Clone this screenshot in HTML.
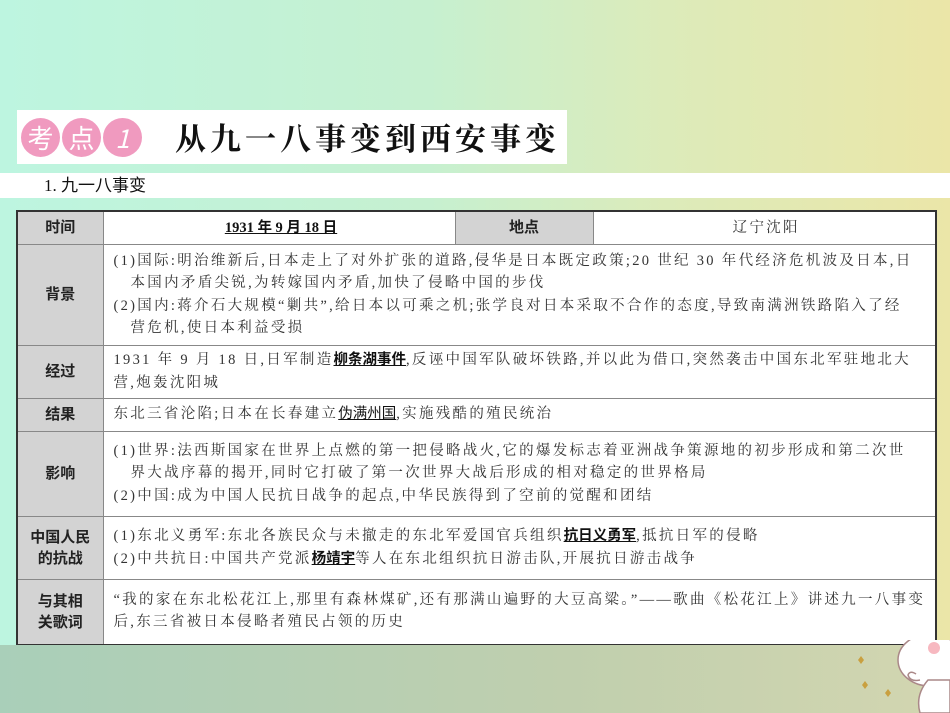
<!DOCTYPE html>
<html><head><meta charset="utf-8"><style>
*{margin:0;padding:0;box-sizing:border-box}
body{width:950px;height:713px;overflow:hidden;position:relative;background:linear-gradient(90deg,#bdf5e0 0%,#c6f0d0 45%,#dcebba 70%,#ebe6a8 100%);font-family:"Liberation Serif","Noto Serif CJK SC",serif;color:#333}
.bot{position:absolute;left:0;top:645px;width:950px;height:68px;background:linear-gradient(90deg,#a9cfb9,#c0cfae 60%,#d3d6b0)}
.title{position:absolute;left:17px;top:110px;width:550px;height:54px;background:#fff}
.c{position:absolute;top:8px;width:39px;height:39px;border-radius:50%;background:#f09abf;color:#fff;font:26px/39px "Noto Sans CJK SC",sans-serif;text-align:center}
.tt{position:absolute;left:158px;top:5px;font:bold 31px/44px "Noto Serif CJK SC",serif;letter-spacing:4px;color:#111;white-space:nowrap}
.band{position:absolute;left:0;top:173px;width:950px;height:25px;background:#fff}
.band span{position:absolute;left:44px;top:2px;font:17px/21px "Liberation Serif","Noto Sans CJK SC",serif;color:#111}
table{position:absolute;left:16px;top:210px;width:921px;height:434px;border-collapse:collapse;border:2px solid #333;background:#fff}
td{border:1px solid #888;font-size:14.5px;line-height:22.5px;letter-spacing:2.3px;vertical-align:middle;padding:0 6px 0 10px;white-space:nowrap}
td.h{background:#d3d3d3;width:86px;text-align:center;font:bold 15px/21px "Liberation Sans","Noto Sans CJK SC",sans-serif;letter-spacing:0;color:#222;padding:0}
.u{font-family:"Liberation Sans","Noto Sans CJK SC",sans-serif;font-weight:bold;text-decoration:underline;letter-spacing:0;color:#111}
.in{padding-left:17px}
</style></head><body>
<div class="title"><div class="c" style="left:4px">考</div><div class="c" style="left:45px">点</div><div class="c" style="left:86px;font-style:italic">1</div><div class="tt">从九一八事变到西安事变</div></div>
<div class="band"><span>1. 九一八事变</span></div>
<table>
<tr style="height:33px"><td class="h">时间</td><td style="text-align:center;width:352px"><span class="u" style="font-family:'Liberation Serif','Noto Sans CJK SC',serif">1931 年 9 月 18 日</span></td><td class="h" style="width:138px">地点</td><td style="text-align:center">辽宁沈阳</td></tr>
<tr style="height:101px"><td class="h">背景</td><td colspan="3">(1)国际:明治维新后,日本走上了对外扩张的道路,侵华是日本既定政策;20 世纪 30 年代经济危机波及日本,日<br><span class="in">本国内矛盾尖锐,为转嫁国内矛盾,加快了侵略中国的步伐</span><br>(2)国内:蒋介石大规模“剿共”,给日本以可乘之机;张学良对日本采取不合作的态度,导致南满洲铁路陷入了经<br><span class="in">营危机,使日本利益受损</span></td></tr>
<tr style="height:53px"><td class="h">经过</td><td colspan="3">1931 年 9 月 18 日,日军制造<span class="u">柳条湖事件</span>,反诬中国军队破坏铁路,并以此为借口,突然袭击中国东北军驻地北大<br>营,炮轰沈阳城</td></tr>
<tr style="height:33px"><td class="h">结果</td><td colspan="3">东北三省沦陷;日本在长春建立<span class="u" style="font-weight:normal">伪满州国</span>,实施残酷的殖民统治</td></tr>
<tr style="height:85px"><td class="h">影响</td><td colspan="3">(1)世界:法西斯国家在世界上点燃的第一把侵略战火,它的爆发标志着亚洲战争策源地的初步形成和第二次世<br><span class="in">界大战序幕的揭开,同时它打破了第一次世界大战后形成的相对稳定的世界格局</span><br>(2)中国:成为中国人民抗日战争的起点,中华民族得到了空前的觉醒和团结</td></tr>
<tr style="height:63px"><td class="h">中国人民<br>的抗战</td><td colspan="3">(1)东北义勇军:东北各族民众与未撤走的东北军爱国官兵组织<span class="u">抗日义勇军</span>,抵抗日军的侵略<br>(2)中共抗日:中国共产党派<span class="u">杨靖宇</span>等人在东北组织抗日游击队,开展抗日游击战争</td></tr>
<tr style="height:66px"><td class="h">与其相<br>关歌词</td><td colspan="3" style="vertical-align:top;padding-top:9px">“我的家在东北松花江上,那里有森林煤矿,还有那满山遍野的大豆高粱。”——歌曲《松花江上》讲述九一八事变<br>后,东三省被日本侵略者殖民占领的历史</td></tr>
</table>
<div class="bot"></div>
<svg style="position:absolute;left:850px;top:640px" width="100" height="73"><ellipse cx="80" cy="20" rx="32" ry="26" fill="#fff" stroke="#a88" stroke-width="1.5"/><circle cx="84" cy="8" r="6" fill="#f7b8c0"/><path d="M78 40 Q65 55 70 73 L100 73 L100 40Z" fill="#fff" stroke="#a88" stroke-width="1.5"/><path d="M66 34 Q60 30 58 35 Q60 42 70 40" fill="#fff" stroke="#a88" stroke-width="1.5"/><path d="M8 20 l3 -4 3 4 -3 4z M12 45 l3 -4 3 4 -3 4z M35 53 l3 -4 3 4 -3 4z" fill="#c9a040"/></svg>
</body></html>
